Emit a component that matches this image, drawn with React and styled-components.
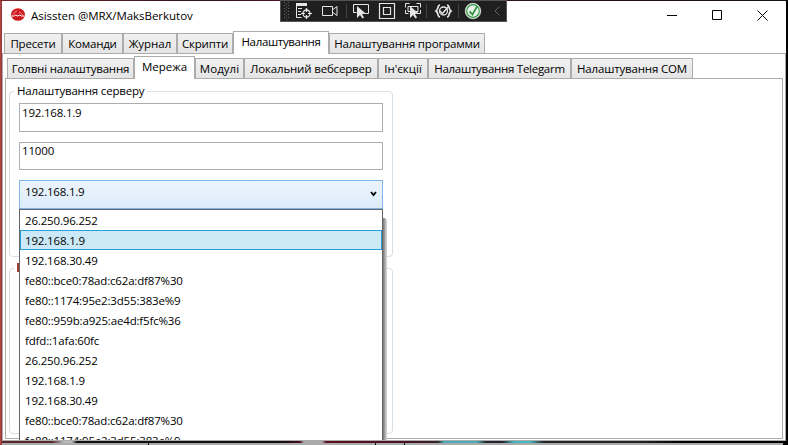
import React from 'react';
import styled, { createGlobalStyle, css } from 'styled-components';

const Global = createGlobalStyle`
  *, *::before, *::after { box-sizing: border-box; }
  body {
    margin: 0;
    overflow: hidden;
    font: 11.5px/16px "Open Sans", "Noto Sans", sans-serif;
    color: #000;
  }
`;

const Desktop = styled.div`
  display: flex;
  flex-direction: column;
  width: 788px;
  height: 445px;
  padding: 1px 2px 0 2px;
  background:
    linear-gradient(#000, #000) right top / 2px 100% no-repeat,
    linear-gradient(90deg, #7c2a2e, #2a1217 25%, #5a1525 40%, #24101c 70%, #1a1016) 0 0 / 100% 1px no-repeat,
    linear-gradient(90deg, #c04543, #83383a) 0 0 / 2px 100% no-repeat,
    #000;
`;

const Window = styled.main`
  position: relative;
  display: flex;
  flex-direction: column;
  width: 784px;
  height: 440px;
  background: #fff;
`;

const TitleBar = styled.header`
  display: flex;
  align-items: center;
  height: 30px;
  padding-left: 9px;
`;

const Logo = styled.svg`
  width: 14px;
  height: 13px;
  margin-top: -3px;
`;

const Text = styled.span`
  white-space: pre;
  letter-spacing: ${({ $ls = 0 }) => $ls}px;
`;

const Title = styled(Text)`
  flex: 1;
  margin-left: 6px;
`;

const WindowButtons = styled.div`
  display: flex;
  width: 136px;
`;

const WindowButton = styled.button`
  display: grid;
  flex: none;
  place-items: center;
  width: 45px;
  height: 30px;
  padding: 0 0 2px;
  border: 0;
  background: none;
`;

const DebugBar = styled.div`
  position: absolute;
  top: -1px;
  left: 278px;
  display: flex;
  width: 227px;
  height: 22px;
  background: #1f1f1f;
  border: 1px solid #555;
`;

const Tabs = styled.nav`
  display: flex;
  align-items: flex-end;
  height: 22px;
  padding-left: 2px;
`;

const Tab = styled.button`
  display: flex;
  justify-content: center;
  align-items: center;
  width: ${({ $w }) => $w}px;
  height: 20px;
  padding: 0;
  font: inherit;
  color: inherit;
  background: linear-gradient(#f0f0f0, #e5e5e5);
  border: 1px solid #acacac;
  border-bottom: 0;
  ${({ $active }) =>
    $active &&
    css`
      position: relative;
      height: 23px;
      margin-bottom: -1px;
      padding-bottom: 2px;
      background: #fff;
    `}
`;

const OuterPanel = styled.section`
  display: flex;
  flex-direction: column;
  flex: 1;
  padding: 2px 2px 1px;
  border: 1px solid #acacac;
`;

const InnerPanel = styled.section`
  flex: 1;
  min-height: 0;
  padding: 4px 3px 0;
  border: 1px solid #acacac;
`;

const Group = styled.fieldset`
  width: 384px;
  height: ${({ $h }) => $h}px;
  min-width: 0;
  margin: 0 0 3px;
  padding: 0 9px;
  border: 1px solid #d5dfe5;
  border-radius: 4px;
`;

const Legend = styled.legend`
  height: 16px;
  margin-left: -5px;
  padding: 0 3px;
`;

const LegendMark = styled.div`
  width: 2px;
  height: 9px;
  margin-top: 3px;
  background: #a33a34;
`;

const Fields = styled.div`
  display: flex;
  flex-direction: column;
  margin-top: 4px;
`;

const Field = styled.div`
  width: 364px;
  height: ${({ $h }) => $h}px;
  margin-bottom: 10px;
  padding: ${({ $top = 1 }) => $top}px 2px;
  border: 1px solid #abadb3;
`;

const Combo = styled.div`
  position: relative;
  display: flex;
  justify-content: space-between;
  width: 364px;
  height: 29px;
  padding: 3px 5px;
  background: linear-gradient(#ecf4fc, #dcecfc);
  border: 1px solid #7eb4ea;
`;

const Arrow = styled.svg`
  width: 7px;
  height: 6px;
  margin-top: 7px;
`;

const Popup = styled.ul`
  position: absolute;
  z-index: 2;
  top: 28px;
  left: -1px;
  width: 364px;
  height: 231px;
  margin: 0;
  padding: 0;
  list-style: none;
  background: #fff;
  border: 1px solid #646464;
  border-bottom: 0;
`;

const Options = styled.div`
  height: 230px;
  overflow: hidden;
`;

const Shadow = styled.div`
  position: absolute;
  top: 8px;
  left: 363px;
  width: 4px;
  height: 222px;
  background: linear-gradient(90deg, #777, #ddd);
  border-radius: 0 3px 0 0;
`;

const Option = styled.li`
  height: 20px;
  padding: 2px 4px 0;
  border: 1px solid ${({ $selected }) => ($selected ? '#26a0da' : 'transparent')};
  background: ${({ $selected }) => ($selected ? '#cbe8f6' : 'transparent')};
`;

const BottomStrip = styled.div`
  width: 784px;
  height: 4px;
  background:
    linear-gradient(#111, #111) 146px 2px / 1px 2px no-repeat,
    linear-gradient(#111, #111) 373px 2px / 1px 2px no-repeat,
    linear-gradient(#111, #111) 402px 2px / 1px 2px no-repeat,
    linear-gradient(#aaa, #aaa) 0 2px / 781px 2px no-repeat,
    linear-gradient(90deg, #59282a 0 50px, #bbb 62px 70px, #130d10 75px 280px, #4b1020 298px, #aaa 302px 320px, #5c1020 324px, #4b1020 400px, #34222b 436px, #49aeb9 442px 475px, #24222b 484px 500px, #42b7c0 512px 528px, #252129 542px 640px, #000 680px);
`;

const outerTabs = [
  ['Пресети', 58, -0.2],
  ['Команди', 61, -0.22],
  ['Журнал', 54, 0],
  ['Скрипти', 56, -0.2],
  ['Налаштування', 96, -0.34],
  ['Налаштування программи', 156, -0.19],
];

const innerTabs = [
  ['Голвні налаштування', 127, -0.2],
  ['Мережа', 61, 0],
  ['Модулі', 49, 0.05],
  ['Локальний вебсервер', 134, -0.17],
  ["Ін'єкції", 50, 0],
  ['Налаштування Telegarm', 143, -0.27],
  ['Налаштування COM', 122, -0.17],
];

const addresses = [
  '26.250.96.252',
  '192.168.1.9',
  '192.168.30.49',
  'fe80::bce0:78ad:c62a:df87%30',
  'fe80::1174:95e2:3d55:383e%9',
  'fe80::959b:a925:ae4d:f5fc%36',
  'fdfd::1afa:60fc',
  '26.250.96.252',
  '192.168.1.9',
  '192.168.30.49',
  'fe80::bce0:78ad:c62a:df87%30',
  'fe80::1174:95e2:3d55:383e%9',
];

function TabList({ items, active }) {
  return (
    <Tabs>
      {items.map(([label, width, ls]) => (
        <Tab key={label} $w={width} $active={label === active}>
          <Text $ls={ls}>{label}</Text>
        </Tab>
      ))}
    </Tabs>
  );
}

function AppLogo() {
  return (
    <Logo viewBox="0 0 14 13">
      <ellipse cx="7" cy="6.5" rx="7" ry="6.3" fill="#d01c20" />
      <path d="M2 6.500 4 4l2-1M8 4l2 1 1.500 2" stroke="#f0a5a2" fill="none" strokeWidth=".8" />
      <path d="M.5 8h3l1-1 2 1 2-1 2 1h3" stroke="#fff" fill="none" />
      <path d="M3 10.500h8" stroke="#9c1518" strokeDasharray="1 1" />
    </Logo>
  );
}

function DebugIcons() {
  return (
    <svg width="225" height="20" viewBox="281 1 225 20" fill="none" stroke="#e6e6e6">
      <g stroke="#666" strokeDasharray="1 2">
        <path d="M284.5 2v17M288.5 2v17M286.5 3.5v16" />
      </g>
      <path d="M296 4.5h11" strokeWidth="3" />
      <path d="M296.5 5v12.5h5M298 8.5h4M298 11.5h3M298 14.5h3" />
      <circle cx="306.5" cy="13.5" r="3.5" strokeWidth="1.3" />
      <path d="M306.5 8v4M306.5 15v4M301 13.5h4M308 13.5h4" strokeWidth="1.2" />
      <path d="M322.5 6.5h10v9h-10zM333 9.5l4-3v9l-4-3" />
      <path d="M346.5 4v14M426.5 4v14M458.5 4v14" stroke="#444" />
      <path d="M356.5 12.5h-3V4.5h15v9h-4" />
      <path d="M357 6v12l3-3 2.5 3.5 1.5-1-2-3.5 4-.2z" fill="#e6e6e6" stroke="none" />
      <path d="M379.5 3.5h15v15h-15zM383.5 7.5h7v7h-7z" strokeWidth="1.2" />
      <path d="M405.5 7.5V3.5h4M416.5 3.5h4v4M405.5 10v3.5h3M417.5 13.5h3V10M410 11.500h-2v-5h10v5h-2" />
      <path d="M410 6v12l3-3 2.5 3.5 1.5-1-2-3.5 4-.2z" fill="#e6e6e6" stroke="none" />
      <path d="M440 5c-3 0-1 4-4 6 3 2 1 6 4 6M447 5c3 0 1 4 4 6-3 2-1 6-4 6" strokeWidth="1.7" />
      <circle cx="443.500" cy="11" r="4" strokeWidth="1.300" />
      <path d="m440 11 2.500 2.500L448 7" strokeWidth="1.500" />
      <circle cx="473" cy="11" r="7.800" fill="#e8f2e8" stroke="#e8f2e8" strokeWidth=".6" />
      <circle cx="473" cy="11" r="6.300" stroke="#369645" strokeWidth="1.200" />
      <path d="m469.500 11.500 3 3 4.500-8" stroke="#369645" strokeWidth="1.800" />
      <path d="m499.500 6.500-4.500 4.500 4.500 4.500" stroke="#666" />
    </svg>
  );
}

export default function App() {
  return (
    <Desktop>
      <Global />
      <Window>
        <TitleBar>
          <AppLogo />
          <Title $ls={-0.03}>Asissten @MRX/MaksBerkutov</Title>
          <WindowButtons>
            <WindowButton aria-label="Minimize">
              <svg width="11" height="11" stroke="#000"><path d="M0 5.500h10" /></svg>
            </WindowButton>
            <WindowButton aria-label="Maximize">
              <svg width="11" height="11" stroke="#000" fill="none"><path d="M.5.5h9v9h-9z" /></svg>
            </WindowButton>
            <WindowButton aria-label="Close">
              <svg width="11" height="11" stroke="#000"><path d="m.5.5 10 10m0-10-10 10" /></svg>
            </WindowButton>
          </WindowButtons>
        </TitleBar>
        <DebugBar><DebugIcons /></DebugBar>
        <TabList items={outerTabs} active="Налаштування" />
        <OuterPanel>
          <TabList items={innerTabs} active="Мережа" />
          <InnerPanel>
            <Group $h={174}>
              <Legend><Text $ls={-0.18}>Налаштування серверу</Text></Legend>
              <Fields>
                <Field $h={29}><Text $ls={-0.2}>192.168.1.9</Text></Field>
                <Field $h={28} $top={0}><Text $ls={-0.15}>11000</Text></Field>
                <Combo>
                  <Text $ls={-0.2}>192.168.1.9</Text>
                  <Arrow viewBox="0 0 7 6"><path d="m1 1 2.500 3L6 1" fill="none" stroke="#000" strokeWidth="1.800" /></Arrow>
                  <Popup>
                    <Options>
                      {addresses.map((address, i) => (
                        <Option key={i} $selected={i === 1}><Text $ls={-0.17}>{address}</Text></Option>
                      ))}
                    </Options>
                    <Shadow />
                  </Popup>
                </Combo>
              </Fields>
            </Group>
            <Group $h={174}>
              <Legend><LegendMark /></Legend>
            </Group>
          </InnerPanel>
        </OuterPanel>
      </Window>
      <BottomStrip />
    </Desktop>
  );
}
